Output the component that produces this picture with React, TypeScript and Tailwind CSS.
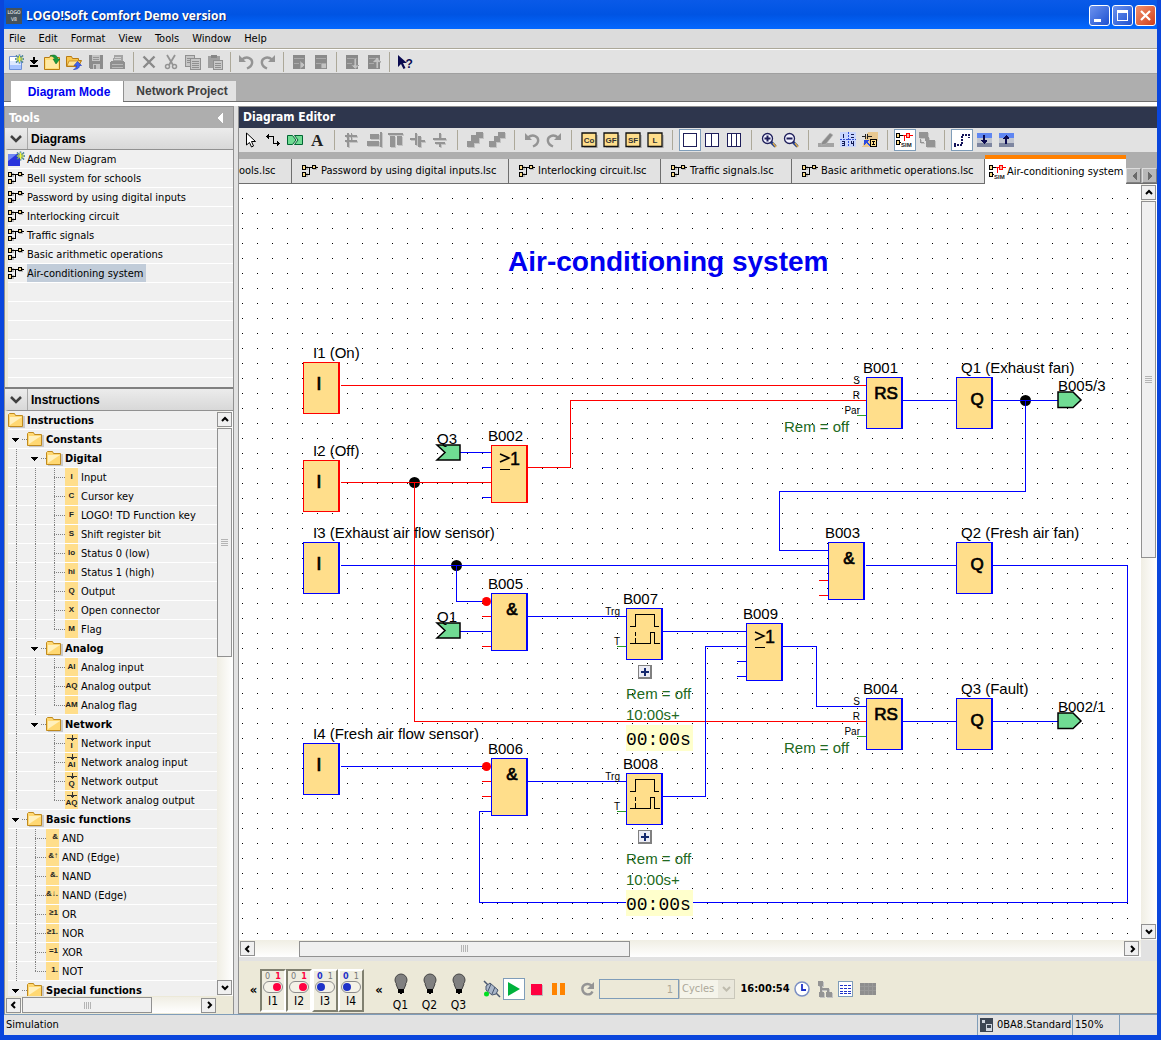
import type { ReactNode } from "react";

const UI = "font-['DejaVu_Sans_Condensed','DejaVu_Sans',sans-serif]";
const ARIAL = "font-['Liberation_Sans',Arial,sans-serif]";

/* ---------- icons ---------- */

function Svg({ w = 16, h = 16, smooth = false, children }: { w?: number; h?: number; smooth?: boolean; children: ReactNode }) {
  return (
    <svg width={w} height={h} viewBox={`0 0 ${w} ${h}`} fill="none" shapeRendering={smooth ? "auto" : "crispEdges"} className="shrink-0" aria-hidden="true">
      {children}
    </svg>
  );
}

function Sparkle({ x, y }: { x: number; y: number }) {
  return (
    <g transform={`translate(${x} ${y})`}>
      <path d="M-4 0h9M0.5-4.500v9M-3-3.500l7 7M4-3.500l-7 7" stroke="#2d6f9c" strokeWidth="1.600" />
      <path d="M-3 0h7M0.500-3.500v7M-2-2.500l5 5M3-2.500l-5 5" stroke="#f6f63a" strokeWidth="1" />
    </g>
  );
}

const NewDocIcon = () => (
  <Svg smooth>
    <path d="M1.500 2.500h12v13h-12z" fill="#fff" stroke="#6d8fd8" />
    <path d="M2 11h11v4H2z" fill="#a9c4ff" />
    <path d="M2 7h11v4H2z" fill="#dfe9ff" />
    <Sparkle x={11} y={5} />
  </Svg>
);
const DropIcon = () => (
  <Svg w={8} h={10}>
    <path d="M3 0h2v3h3v1l-4 3l-4-3v-1h3zM0 8h8v2H0z" fill="#000" />
  </Svg>
);
const OpenIcon = () => (
  <Svg smooth>
    <path d="M.5 3.500h5l1-2h4v2h5v12H.5z" fill="#ffdf7a" stroke="#b97b12" />
    <path d="M2 6h12v8H2z" fill="#ffe9a4" />
    <path d="M6 2c4-2 7-1 8 3h2l-4 5-3-5h2c-1-2-3-3-5-3z" fill="#189a3c" stroke="#0d6b28" strokeWidth=".5" />
  </Svg>
);
const FolderUpIcon = () => (
  <Svg smooth>
    <path d="M.5 2.500h5l1 2h6v2h3l-3 6H.5z" fill="#f8c64f" stroke="#b97b12" />
    <path d="M3 7h12l-3 5H1z" fill="#ffe394" stroke="#b97b12" strokeWidth=".7" />
    <path d="M11.500 7.500l4 4h-2c0 3-3 4-6 4 2-1 3-2 3-4H8z" fill="#3f63f0" stroke="#1c38b8" strokeWidth=".6" />
  </Svg>
);
const SaveIcon = () => (
  <Svg>
    <path d="M1 1h14v14H2l-1-1z" fill="#8c8c8c" />
    <path d="M4 1h8v6H4zM5 10h7v5H5z" fill="#c4c4c4" />
    <path d="M5 3h6M5 5h6" stroke="#969696" />
    <path d="M6 11h2v4H6z" fill="#8c8c8c" />
  </Svg>
);
const PrintIcon = () => (
  <Svg>
    <path d="M4 1h9v6H3z" fill="#a4a4a4" />
    <path d="M5 3h6M4 5h7" stroke="#d2d2d2" />
    <path d="M1 7h13l1 2v6H0V8z" fill="#909090" />
    <path d="M2 10h11M2 13h11" stroke="#b8b8b8" />
  </Svg>
);
const DeleteIcon = () => (
  <Svg smooth>
    <path d="M2.500 2.500l11 11M13.500 2.500l-11 11" stroke="#8a8a8a" strokeWidth="2.400" />
  </Svg>
);
const CutIcon = () => (
  <Svg smooth>
    <path d="M4 1l6 10M12 1L6 11" stroke="#949494" strokeWidth="1.800" />
    <circle cx="4.500" cy="12.500" r="2" stroke="#949494" strokeWidth="1.500" />
    <circle cx="11.500" cy="12.500" r="2" stroke="#949494" strokeWidth="1.500" />
  </Svg>
);
const CopyIcon = () => (
  <Svg>
    <path d="M.5 1.500h9v11h-9z" fill="#c6c6c6" stroke="#909090" />
    <path d="M2 4h6M2 6h6M2 8h6" stroke="#909090" />
    <path d="M5.500 4.500h10v11h-10z" fill="#c6c6c6" stroke="#909090" />
    <path d="M7 7h7M7 9h7M7 11h7M7 13h7" stroke="#909090" />
  </Svg>
);
const PasteIcon = () => (
  <Svg>
    <path d="M1 2h12v12H1z" fill="#a0a0a0" />
    <path d="M4 1h6v3H4z" fill="#868686" />
    <path d="M6.500 6.500h9v9h-9z" fill="#c8c8c8" stroke="#909090" />
    <path d="M8 9h6M8 11h6M8 13h6" stroke="#909090" />
  </Svg>
);
const UndoIcon = () => (
  <Svg smooth>
    <path d="M1 1v7h7z" fill="#949494" />
    <path d="M4 5.500C9 1.500 15 4.500 14 9.500c-.5 2.500-2.500 4-5 5" stroke="#949494" strokeWidth="2.400" />
  </Svg>
);
const RedoIcon = () => (
  <Svg smooth>
    <path d="M15 1v7H8z" fill="#949494" />
    <path d="M12 5.500C7 1.500 1 4.500 2 9.500c.5 2.500 2.500 4 5 5" stroke="#949494" strokeWidth="2.400" />
  </Svg>
);
const ModuleIcon = ({ d }: { d: string }) => (
  <Svg>
    <path d="M2 1h12v14H2z" fill="#8a8a8a" />
    <path d="M3 4.500h10M3 9.500h5" stroke="#aaa" />
    <path d={d} fill="#c2c2c2" stroke="#949494" strokeWidth=".5" />
  </Svg>
);
const HelpIcon = () => (
  <Svg smooth>
    <path d="M1 1v12l3-3 2.500 5 2-1-2.500-5h4z" fill="#0a0a50" />
    <text x="8.500" y="14" fontSize="12" fontWeight="700" fontFamily="Liberation Sans" fill="#0a0a50">?</text>
  </Svg>
);

const DiagramIcon = () => (
  <Svg w={16} h={14}>
    <path d="M2 2h4v4H2zM2 9h4v4H2zM11 2h4v4h-4z" fill="#b9b9b9" />
    <path d="M4 3.500h12M7.500 3v7M4 10.500h4" stroke="#000" />
    <path d="M.5 1.500h3v4h-3zM.5 8.500h3v4h-3zM10.500 1.500h3v3h-3z" fill="#ffde8b" stroke="#000" />
  </Svg>
);
const SimIcon = () => (
  <Svg w={18} h={16}>
    <path d="M8.500 9V3.500M6 3.500h11" stroke="#f00" />
    <path d="M10.500 1.500h3v4h-3z" fill="#ffb0a0" stroke="#f00" />
    <path d="M.5 1.500h3v4h-3zM.5 8.500h3v4h-3z" fill="#ffde8b" stroke="#000" />
    <path d="M4 3.500h3M4 10.500h1" stroke="#000" />
    <text x="5" y="15" fontSize="6" fontFamily="Liberation Sans" fontWeight="700" fill="#222">SIM</text>
  </Svg>
);

const PointerIcon = () => (
  <Svg smooth>
    <path d="M3.500 1v12l3-2.500 2 4.500 2-1-2-4.500h4z" fill="#fff" stroke="#000" />
  </Svg>
);
const WireIcon = () => (
  <Svg>
    <path d="M1 4.500h8M8.500 5v6M8 11.500h7M3.500 2v5M2.500 3v3M12.500 9v5M13.500 10v3" stroke="#000" />
  </Svg>
);
const ConnectorIcon = () => (
  <Svg smooth>
    <path d="M.5 3.500h5l3.500 4.500-3.500 4.500h-5z" fill="#70db93" stroke="#063" />
    <path d="M7.500 3.500h8v9h-8l3.500-4.500z" fill="#70db93" stroke="#063" />
  </Svg>
);
const TextIcon = () => (
  <Svg smooth>
    <text x="2" y="14" fontSize="17" fontWeight="700" fontFamily="Liberation Serif" fill="#222">A</text>
  </Svg>
);
const GrayIcon = ({ d }: { d: string }) => (
  <Svg w={17} h={17}>
    <path d={d} fill="#c4c4c4" transform="translate(1 1)" />
    <path d={d} fill="#949494" />
  </Svg>
);
const BoxIcon = ({ t }: { t: string }) => (
  <Svg w={17} h={16} smooth>
    <path d="M3 3h14v13H3z" fill="#bbb" />
    <path d="M1 1h14v13.500H1z" fill="#ffde8b" stroke="#111" strokeWidth="1.300" />
    <text x="8" y="11" textAnchor="middle" fontSize="8" fontWeight="700" fontFamily="Liberation Sans" fill="#333">{t}</text>
  </Svg>
);
const PageIcon = ({ n }: { n: number }) => (
  <Svg w={14} h={14}>
    <path d="M.5 .5h13v13H.5z" fill="#fff" stroke="#1e1e5a" />
    {n === 2 && <path d="M6.500 0v14" stroke="#1e1e5a" />}
    {n === 3 && <path d="M4.500 0v14M9.500 0v14" stroke="#1e1e5a" />}
  </Svg>
);
const ZoomIcon = ({ plus }: { plus?: boolean }) => (
  <Svg smooth>
    <path d="M10 10l4.500 4.500" stroke="#1e3a8a" strokeWidth="3" />
    <path d="M12 11l3 4" stroke="#d6a84a" strokeWidth="1.600" />
    <circle cx="6.500" cy="6.500" r="5" fill="#f2f2ff" stroke="#1e1e5a" strokeWidth="1.300" />
    <path d={plus ? "M3.500 6.500h6M6.500 3.500v6" : "M3.500 6.500h6"} stroke="#1e1e5a" strokeWidth="2" />
  </Svg>
);
const PenIcon = () => (
  <Svg smooth>
    <path d="M0 11h16v4H0z" fill="#a4a4a4" />
    <path d="M4 10L12 1l3 2-7 9-5 1z" fill="#8c8c8c" stroke="#bbb" strokeWidth=".6" />
  </Svg>
);
const PagesIcon = () => (
  <Svg>
    <path d="M0 0h16v15H0z" fill="#c9d6ff" />
    <path d="M0 7.500h16M8.500 0v15" stroke="#3250d8" strokeDasharray="2 1" />
    <path d="M3 2h1v4H3zM11 2h3v1h-1v1h-1v1h2v1h-3V5h1V4h1V3h-2zM2 9h3v5H2v-1h2v-1H2v-1h2v-1H2zM11 9h1v2h1V9h1v5h-1v-2h-2z" fill="#111a55" />
  </Svg>
);
const ConvertIcon = () => (
  <Svg>
    <path d="M6 0h10v9L9 15H0z" fill="#e8c890" />
    <path d="M0 4.500h3M3.500 2v5M5.500 2v5M6 4.500h4" stroke="#222" />
    <path d="M2 8h5l-2 2 3 3-1 1-3-3-2 2z" fill="#2a4ae0" />
    <path d="M8.500 7.500h6v7h-6z" fill="#ffde8b" stroke="#000" />
    <path d="M10 9.500h3M10 12.500h3M11.500 9v4" stroke="#000" />
  </Svg>
);
const StepIcon = () => (
  <Svg>
    <path d="M0 12h8v2H0zM7 3h2v11H7zM7 3h8v2H7z" fill="#fff" />
    <path d="M0 13h8M8 12V3M8 3h8M1 11v4M15 2v4" stroke="#14145a" strokeWidth="2" strokeDasharray="2 1" />
  </Svg>
);
const LayerIcon = ({ up }: { up?: boolean }) => (
  <Svg>
    <path d="M1 1h15v5H1z" fill="#5f86f2" />
    <path d="M1 6h15v5H1z" fill="#c2c6d0" />
    <path d="M1 11h15v4H1z" fill="#7e86a0" />
    <path d={up ? "M7 12V7H5V6l3-3 3 3v1H9v5z" : "M7 3v5H5v1l3 3 3-3V8H9V3z"} fill="#0a0a50" />
  </Svg>
);

const Folder = () => (
  <Svg w={17} h={17} smooth>
    <path d="M2 4h15v12H2z" fill="#c9c9c9" />
    <path d="M.5 14.500V2.500l1-1h5l1 2h7v11z" fill="#ffd872" stroke="#c08a1e" />
    <path d="M2 5h12L2 13z" fill="#fff0bd" />
  </Svg>
);
const AddDiagramIcon = () => (
  <Svg w={17} h={17} smooth>
    <path d="M0 3h12v12H0z" fill="#2a34dc" />
    <path d="M0 3h9L0 10z" fill="#7189f5" />
    <Sparkle x={12} y={5} />
  </Svg>
);

/* ---------- shared parts ---------- */

function ToolButton({ label, framed, children }: { label: string; framed?: boolean; children: ReactNode }) {
  return (
    <button type="button" aria-label={label} className={`flex h-[22px] w-[22px] shrink-0 items-center justify-center ${framed ? "border border-[#7f9db9] bg-white" : ""}`}>
      {children}
    </button>
  );
}

function Sep({ wide }: { wide?: boolean }) {
  return (
    <span className={`flex h-5 shrink-0 justify-center ${wide ? "w-[13px]" : "w-[9px]"}`}>
      <span className="w-px bg-[#aca899]" />
    </span>
  );
}

type Dir = "up" | "down" | "left" | "right";
const arrowPaths: Record<Dir, string> = {
  up: "M1 5l3-3 3 3",
  down: "M1 2l3 3 3-3",
  left: "M5 1L2 4l3 3",
  right: "M3 1l3 3-3 3",
};

function ScrollArrow({ dir }: { dir: Dir }) {
  return (
    <button type="button" aria-label={`Scroll ${dir}`} className="flex h-[15px] w-[15px] shrink-0 items-center justify-center border border-[#919191] bg-[#f0f0f0]">
      <Svg w={8} h={8} smooth>
        <path d={arrowPaths[dir]} stroke="#000" strokeWidth="2" />
      </Svg>
    </button>
  );
}

function Grip({ vertical }: { vertical?: boolean }) {
  return (
    <span className={`flex gap-px ${vertical ? "flex-col" : ""}`}>
      {[0, 1, 2, 3].map((i) => (
        <span key={i} className={vertical ? "h-px w-[7px] bg-[#b4b4b4]" : "h-[7px] w-px bg-[#b4b4b4]"} />
      ))}
    </span>
  );
}

/* ---------- sidebar ---------- */

function SectionHeader({ title }: { title: string }) {
  return (
    <div className="flex h-[21px] shrink-0 items-center bg-linear-to-b from-[#ececec] to-[#d8d8d8]">
      <button type="button" aria-label={`Collapse ${title}`} className="flex h-full w-[23px] items-center justify-center border-r border-[#a8a8a8]">
        <Svg w={12} h={8} smooth>
          <path d="M1 1l5 5 5-5" stroke="#404040" strokeWidth="2.500" />
        </Svg>
      </button>
      <h2 className={`pl-[3px] text-xs font-bold ${ARIAL}`}>{title}</h2>
    </div>
  );
}

const diagrams = ["Bell system for schools", "Password by using digital inputs", "Interlocking circuit", "Traffic signals", "Basic arithmetic operations", "Air-conditioning system"];

type Row = { label: string; kind: "root" | "folder" | "leaf"; guides: boolean[]; last?: boolean; glyph?: string; net?: boolean };

const leaf = (label: string, glyph: string, guides: boolean[], last = false, net = false): Row => ({ label, kind: "leaf", glyph, guides, last, net });
const folder = (label: string, guides: boolean[]): Row => ({ label, kind: "folder", guides });

const tree: Row[] = [
  { label: "Instructions", kind: "root", guides: [] },
  folder("Constants", []),
  folder("Digital", [true]),
  leaf("Input", "I", [true, true]),
  leaf("Cursor key", "C", [true, true]),
  leaf("LOGO! TD Function key", "F", [true, true]),
  leaf("Shift register bit", "S", [true, true]),
  leaf("Status 0 (low)", "lo", [true, true]),
  leaf("Status 1 (high)", "hi", [true, true]),
  leaf("Output", "Q", [true, true]),
  leaf("Open connector", "X", [true, true]),
  leaf("Flag", "M", [true, true], true),
  folder("Analog", [true]),
  leaf("Analog input", "AI", [true, true]),
  leaf("Analog output", "AQ", [true, true]),
  leaf("Analog flag", "AM", [true, true], true),
  folder("Network", [true]),
  leaf("Network input", "I", [true, false], false, true),
  leaf("Network analog input", "AI", [true, false], false, true),
  leaf("Network output", "Q", [true, false], false, true),
  leaf("Network analog output", "AQ", [true, false], true, true),
  folder("Basic functions", []),
  leaf("AND", "&", [true]),
  leaf("AND (Edge)", "&↑", [true]),
  leaf("NAND", "&.", [true]),
  leaf("NAND (Edge)", "&↓.", [true]),
  leaf("OR", "≥1", [true]),
  leaf("NOR", "≥1.", [true]),
  leaf("XOR", "=1", [true]),
  leaf("NOT", "1.", [true], true),
  folder("Special functions", []),
];

function Guide({ d }: { d: string }) {
  return (
    <Svg w={19} h={19}>
      <path d={d} stroke="#808080" strokeDasharray="1 1" />
    </Svg>
  );
}

function Glyph({ row }: { row: Row }) {
  const place = row.guides.length === 1 ? "items-end pt-[3px] pr-px" : row.net ? "items-center pt-px" : "items-center pt-1";
  return (
    <span className={`flex h-[18px] w-[13px] shrink-0 flex-col overflow-hidden bg-[#ffde8b] text-[8px] leading-[9px] font-bold text-[#222] ${place} ${ARIAL}`}>
      {row.net && (
        <Svg w={12} h={6}>
          <path d="M1 3.500h10M6.500 0v6M5 4.500h3" stroke="#333" />
        </Svg>
      )}
      <span>{row.glyph}</span>
    </span>
  );
}

function TreeRow({ row }: { row: Row }) {
  return (
    <li className="flex h-[19px] shrink-0 items-center border-b border-white bg-[#f0f0f0]">
      {row.guides.map((on, i) => (on ? <Guide key={i} d="M8.500 0v19" /> : <span key={i} className="w-[19px]" />))}
      {row.kind === "folder" && (
        <Svg w={19} h={19}>
          <path d="M4 8h7v1h-1v1h-1v1h-1v1h-1v-1h-1v-1h-1v-1h-1z" fill="#000" />
          <path d="M14 9.500h5" stroke="#808080" strokeDasharray="1 1" />
        </Svg>
      )}
      {row.kind === "leaf" && <Guide d={row.last ? "M8.500 0v10M8 9.500h11" : "M8.500 0v19M8 9.500h11"} />}
      {row.kind === "leaf" ? <Glyph row={row} /> : <Folder />}
      <button type="button" className={`truncate pt-px text-[11px] leading-4 ${row.kind === "leaf" ? "pl-[3px]" : "pl-[2px] font-bold"}`}>
        {row.label}
      </button>
    </li>
  );
}

function Sidebar() {
  return (
    <aside className="flex w-[230px] shrink-0 flex-col border-x border-t border-[#919191]">
      <div className="flex h-[21px] shrink-0 items-center justify-between bg-[#aeaeae] pr-[10px] pl-1 text-white">
        <h2 className="text-xs leading-5 font-bold">Tools</h2>
        <button type="button" aria-label="Hide tools">
          <Svg w={6} h={12}>
            <path d="M6 0v12L0 6z" fill="#fff" />
          </Svg>
        </button>
      </div>
      <SectionHeader title="Diagrams" />
      <ul className="flex h-[238px] shrink-0 flex-col overflow-hidden border-t border-l-[3px] border-t-[#919191] border-l-[#ece9d8] bg-[#f0f0f0]">
        <li className="flex h-[19px] shrink-0 items-center border-b border-white">
          <AddDiagramIcon />
          <button type="button" className="pt-px pl-[2px] text-[11px] leading-4">Add New Diagram</button>
        </li>
        {diagrams.map((d, i) => (
          <li key={d} className="flex h-[19px] shrink-0 items-center border-b border-white">
            <DiagramIcon />
            <button type="button" className={`ml-[3px] h-[18px] pt-px pr-[3px] text-[11px] leading-4 ${i === 5 ? "bg-[#c1ccd9]" : ""}`}>
              {d}
            </button>
          </li>
        ))}
        {[0, 1, 2, 3, 4].map((i) => (
          <li key={i} className="h-[19px] shrink-0 border-b border-white" />
        ))}
      </ul>
      <div className="h-[2px] shrink-0 bg-[#808080]" />
      <SectionHeader title="Instructions" />
      <div className="flex min-h-0 flex-1 border-t border-l-[3px] border-t-[#919191] border-l-[#ece9d8]">
        <ul className="flex min-h-0 min-w-0 flex-1 flex-col overflow-hidden">
          {tree.map((row, i) => (
            <TreeRow key={i} row={row} />
          ))}
        </ul>
        <div className="flex w-4 flex-col items-start bg-linear-to-r from-[#f0eee4] to-white pt-px pb-px">
          <ScrollArrow dir="up" />
          <div className="mt-px flex h-[229px] w-[15px] items-center justify-center border border-[#919191] bg-[#f0f0f0]">
            <Grip vertical />
          </div>
          <div className="flex-1" />
          <ScrollArrow dir="down" />
        </div>
      </div>
      <div className="flex h-[18px] shrink-0 items-center bg-[#ece9d8] pr-[17px] pl-px">
        <ScrollArrow dir="left" />
        <div className="flex h-4 flex-1 bg-linear-to-b from-[#f0eee4] to-white px-px">
          <div className="flex h-4 w-[130px] items-center justify-center border border-[#919191] bg-[#f0f0f0]">
            <Grip />
          </div>
        </div>
        <ScrollArrow dir="right" />
      </div>
    </aside>
  );
}

/* ---------- circuit ---------- */

const BLUE = "#0000ff";
const RED = "#ff0000";

const wires: { d: string; c: string }[] = [
  { c: RED, d: "M341 385H866M528 467H570V400H866M341 482H491M414 482V721H866" },
  { c: RED, d: "M482 616H491M482 646H491M482 781H491M482 796H491M819 580H828M819 595H828" },
  { c: BLUE, d: "M460 452H491M482 467H491M482 497H491M341 565H828M456 565V601H486M460 631H491M528 616H626" },
  { c: BLUE, d: "M341 766H486M528 781H626M491 811H479V902H1127V565H993M866 565H956" },
  { c: BLUE, d: "M663 631H746M663 796H705V646H746M737 661H746M737 676H746M783 646H816V706H866" },
  { c: BLUE, d: "M903 721H956M993 721H1057M903 400H956M993 400H1057M1025 400V491H779V550H828" },
  { c: "#2e9e2e", d: "M857 415H866M857 736H866M617 646H626M617 811H626" },
];

type Block = { x: number; y: number; t: string; h?: number; c?: string; label: string };
const blocks: Block[] = [
  { x: 303, y: 362, t: "I", c: RED, label: "I1 (On)" },
  { x: 303, y: 460, t: "I", c: RED, label: "I2 (Off)" },
  { x: 303, y: 542, t: "I", label: "I3 (Exhaust air flow sensor)" },
  { x: 303, y: 743, t: "I", label: "I4 (Fresh air flow sensor)" },
  { x: 491, y: 445, t: ">1", h: 58, c: RED, label: "B002" },
  { x: 491, y: 593, t: "&", h: 58, label: "B005" },
  { x: 491, y: 758, t: "&", h: 58, label: "B006" },
  { x: 626, y: 608, t: "timer", label: "B007" },
  { x: 626, y: 773, t: "timer", label: "B008" },
  { x: 746, y: 623, t: ">1", h: 58, label: "B009" },
  { x: 866, y: 377, t: "RS", label: "B001" },
  { x: 866, y: 698, t: "RS", label: "B004" },
  { x: 828, y: 542, t: "&", h: 58, label: "B003" },
  { x: 956, y: 377, t: "Q", label: "Q1 (Exhaust fan)" },
  { x: 956, y: 542, t: "Q", label: "Q2 (Fresh air fan)" },
  { x: 956, y: 698, t: "Q", label: "Q3 (Fault)" },
];

const labelOffset: Record<string, number> = { I: 10, Q: 5 };
const glyphX: Record<string, number> = { I: 16, Q: 21, "&": 21, RS: 20 };

function BlockNode({ b }: { b: Block }) {
  const h = b.h ?? 52;
  const c = b.c ?? BLUE;
  return (
    <g transform={`translate(${b.x} ${b.y})`}>
      <rect width="37" height={h} fill={c} />
      <rect x="1" y="1" width="34" height={h - 2} fill="#ffde8b" />
      {b.t === "timer" && (
        <path d="M4 18.500h5M9.500 19V6M9 6.500h19M28.500 6v13M28 18.500h5M4 35.500h20M24.500 36V24M24 24.500h5M28.500 24v12M28 35.500h6M9.500 24v4M9.500 30v5" stroke="#000" fill="none" />
      )}
      {b.t === ">1" && (
        <>
          <path d="M9 9l9 4-9 4" stroke="#000" strokeWidth="1.500" fill="none" shapeRendering="auto" />
          <path d="M9 24.500h10" stroke="#000" />
          <text x="19" y="20" fontSize="18" stroke="#000" strokeWidth=".4">1</text>
        </>
      )}
      {glyphX[b.t] && (
        <text x={glyphX[b.t]} y={b.t === "Q" || b.t === "I" ? 28 : 22} fontSize={b.t === "I" ? 19 : 17} stroke="#000" strokeWidth=".7" textAnchor="middle">
          {b.t}
        </text>
      )}
      <text x={labelOffset[b.t] ?? -3} y="-4" fontSize="15">{b.label}</text>
    </g>
  );
}

const pins: [number, number, string][] = [
  [860, 384, "S"], [860, 399, "R"], [860, 414, "Par"],
  [860, 705, "S"], [860, 720, "R"], [860, 735, "Par"],
  [620, 615, "Trg"], [620, 645, "T"], [620, 780, "Trg"], [620, 810, "T"],
];

function TimerInfo({ y }: { y: number }) {
  return (
    <g transform={`translate(626 ${y})`}>
      <rect x="12" y="57" width="14" height="14" fill="#808080" />
      <rect x="13" y="58" width="11" height="11" fill="#ececf4" />
      <path d="M15 64h8M19 60v8" stroke="#14286e" strokeWidth="2" />
      <g fill="#216921">
        <text y="91" fontSize="15">Rem = off</text>
        <text y="112" fontSize="15">10:00s+</text>
      </g>
      <rect y="117" width="67" height="26" fill="#ffffcc" />
      <text y="137" fontSize="18" fontFamily="Liberation Mono, monospace">00:00s</text>
    </g>
  );
}

function Circuit() {
  return (
    <svg width="902" height="756" viewBox="239 184 902 756" shapeRendering="crispEdges" role="img" aria-label="Air-conditioning system circuit" className={`shrink-0 ${ARIAL}`}>
      <defs>
        <pattern id="grid" x="302" y="198" width="15" height="15" patternUnits="userSpaceOnUse">
          <rect width="1" height="1" fill="#000" />
        </pattern>
      </defs>
      <rect x="239" y="184" width="902" height="756" fill="#fff" />
      <rect x="239" y="184" width="902" height="756" fill="url(#grid)" />
      <text x="508" y="271" fontSize="28" fontWeight="700" fill="#0000f0">Air-conditioning system</text>
      {[[414, 482], [456, 565], [1025, 400]].map(([x, y]) => (
        <circle key={x} cx={x + 0.5} cy={y + 0.5} r="5.500" shapeRendering="auto" />
      ))}
      <g transform="translate(.5 .5)" fill="none" strokeLinecap="square">
        {wires.map((w) => (
          <path key={w.d} d={w.d} stroke={w.c} />
        ))}
      </g>
      {[601, 766].map((y) => (
        <circle key={y} cx="486.500" cy={y + 0.5} r="4.500" fill={RED} shapeRendering="auto" />
      ))}
      {blocks.map((b) => (
        <BlockNode key={b.label} b={b} />
      ))}
      {[{ y: 445, t: "Q3" }, { y: 623, t: "Q1" }].map((c) => (
        <g key={c.t} transform={`translate(437 ${c.y})`}>
          <path d="M0 0h23v15H0l8-7.500z" fill="#70db93" stroke="#000" strokeWidth="1.500" shapeRendering="auto" />
          <text y="-1" fontSize="15">{c.t}</text>
        </g>
      ))}
      {[{ y: 392, t: "B005/3" }, { y: 713, t: "B002/1" }].map((c) => (
        <g key={c.t} transform={`translate(1058 ${c.y})`}>
          <path d="M0 0h15l8 8-8 7.500H0z" fill="#70db93" stroke="#000" strokeWidth="1.500" shapeRendering="auto" />
          <text y="-1" fontSize="15">{c.t}</text>
        </g>
      ))}
      {pins.map(([x, y, t]) => (
        <text key={`${x}-${y}`} x={x} y={y} fontSize="10" textAnchor="end">{t}</text>
      ))}
      <TimerInfo y={608} />
      <TimerInfo y={773} />
      <g fontSize="15" fill="#216921">
        <text x="784" y="432">Rem = off</text>
        <text x="784" y="753">Rem = off</text>
      </g>
    </svg>
  );
}

/* ---------- editor ---------- */

const docTabs = [
  { label: "Password by using digital inputs.lsc", w: "w-[217px]" },
  { label: "Interlocking circuit.lsc", w: "w-[152px]" },
  { label: "Traffic signals.lsc", w: "w-[131px]" },
  { label: "Basic arithmetic operations.lsc", w: "w-[193px]" },
];

function EditorToolbar() {
  return (
    <div className="flex h-6 shrink-0 items-center bg-[#e2e2e2] pl-px">
      <ToolButton label="Selection"><PointerIcon /></ToolButton>
      <ToolButton label="Connect"><WireIcon /></ToolButton>
      <ToolButton label="Cut or join connection"><ConnectorIcon /></ToolButton>
      <ToolButton label="Insert comment"><TextIcon /></ToolButton>
      <Sep wide />
      <ToolButton label="Align automatically"><GrayIcon d="M3 1h2v14H3zM7 1h1v9H7zM1 3h12v2H1zM1 8h12v2H1z" /></ToolButton>
      <ToolButton label="Align right"><GrayIcon d="M14 0h2v15h-2zM4 2h9v5H4zM1 9h12v5H1z" /></ToolButton>
      <ToolButton label="Align top"><GrayIcon d="M0 1h15v2H0zM2 4h5v11H2zM9 4h5v9H9z" /></ToolButton>
      <ToolButton label="Distribute horizontally"><GrayIcon d="M5 1h2v12H5zM0 6h5v2H0zM8 4h3v11H8zM11 8h4v2h-4z" /></ToolButton>
      <ToolButton label="Distribute vertically"><GrayIcon d="M1 6h13v2H1zM7 1h2v5H7zM3 10h10v2H3zM7 12h2v3H7z" /></ToolButton>
      <Sep wide />
      <ToolButton label="Bring to front"><GrayIcon d="M9 0h7v6H9zM4 3h8v8H4zM0 9h7v6H0z" /></ToolButton>
      <ToolButton label="Send to back"><GrayIcon d="M9 0h7v6H9zM5 4h6v6H5zM0 9h7v6H0z" /></ToolButton>
      <Sep wide />
      <ToolButton label="Undo edit"><UndoIcon /></ToolButton>
      <ToolButton label="Redo edit"><RedoIcon /></ToolButton>
      <Sep wide />
      <ToolButton label="Constants"><BoxIcon t="Co" /></ToolButton>
      <ToolButton label="Basic functions"><BoxIcon t="GF" /></ToolButton>
      <ToolButton label="Special functions"><BoxIcon t="SF" /></ToolButton>
      <ToolButton label="Data log"><BoxIcon t="L" /></ToolButton>
      <Sep wide />
      <ToolButton label="One window" framed><PageIcon n={1} /></ToolButton>
      <ToolButton label="Two windows"><PageIcon n={2} /></ToolButton>
      <ToolButton label="Three windows"><PageIcon n={3} /></ToolButton>
      <Sep wide />
      <ToolButton label="Zoom in"><ZoomIcon plus /></ToolButton>
      <ToolButton label="Zoom out"><ZoomIcon /></ToolButton>
      <Sep wide />
      <ToolButton label="Highlight"><PenIcon /></ToolButton>
      <ToolButton label="Page layout"><PagesIcon /></ToolButton>
      <ToolButton label="Convert to LAD"><ConvertIcon /></ToolButton>
      <Sep wide />
      <ToolButton label="Simulation" framed><SimIcon /></ToolButton>
      <ToolButton label="Online test"><GrayIcon d="M0 0h9v6H0zM1 7h1v4H1zM2 10h3v1H2zM6 5h4v4H6zM7 8h9v7H7z" /></ToolButton>
      <Sep wide />
      <ToolButton label="Select lines" framed><StepIcon /></ToolButton>
      <ToolButton label="Expand all"><LayerIcon /></ToolButton>
      <ToolButton label="Collapse all"><LayerIcon up /></ToolButton>
    </div>
  );
}

function DocTabs() {
  return (
    <div className="flex h-8 shrink-0 items-end overflow-hidden bg-[#aeaeae] text-[11px]">
      <button type="button" className="flex h-[25px] w-[53px] shrink-0 items-center justify-start border-r border-b border-[#6e6e6e] bg-[#e2e2e2] leading-4">ools.lsc</button>
      {docTabs.map((t) => (
        <button key={t.label} type="button" className={`flex h-[25px] shrink-0 items-center gap-[3px] border-r border-b border-[#6e6e6e] bg-[#e2e2e2] pl-[10px] leading-4 whitespace-nowrap ${t.w}`}>
          <DiagramIcon />
          {t.label}
        </button>
      ))}
      <button type="button" className="flex h-[29px] min-w-0 flex-1 items-center overflow-hidden border-t-4 border-[#ff8000] bg-white pl-1 leading-4 whitespace-nowrap">
        <SimIcon />
        Air-conditioning system
      </button>
      <div className="flex h-[25px] shrink-0 items-end gap-px border-b border-[#6e6e6e]">
        {["M7 0v8L2 4z", "M2 0v8l5-4z"].map((d, i) => (
          <button key={d} type="button" aria-label={i ? "Next tab" : "Previous tab"} className="flex h-[15px] w-[15px] items-center justify-center border border-t-[#ddd] border-r-[#808080] border-b-[#808080] border-l-[#ddd] bg-[#b8b8b8]">
            <Svg w={8} h={8}>
              <path d={d} fill="#6a6a6a" />
            </Svg>
          </button>
        ))}
      </div>
    </div>
  );
}

const inputs = [
  { id: "I1", on: true },
  { id: "I2", on: true },
  { id: "I3", on: false },
  { id: "I4", on: false },
];

function InputSwitch({ id, on }: { id: string; on: boolean }) {
  const frame = on ? "border-t-[#808070] border-l-[#808070] border-r-white border-b-white" : "border-t-white border-l-white border-r-[#808070] border-b-[#808070]";
  return (
    <button type="button" aria-pressed={on} className={`flex h-[43px] w-[26px] flex-col items-center border-2 bg-[#efede0] ${frame}`}>
      <span className="flex gap-[5px] text-[9px] leading-[10px]">
        <span className={on ? "text-[#777]" : "font-bold text-[#1e32c8]"}>0</span>
        <span className={on ? "font-bold text-[#ff0040]" : "text-[#777]"}>1</span>
      </span>
      <Svg w={20} h={12} smooth>
        <rect x=".5" y=".5" width="19" height="11" rx="5.500" fill="#f4f2e8" stroke="#8c8c8c" />
        <circle cx={on ? 14 : 6} cy="6" r="4" fill={on ? "#ff0040" : "#1e32c8"} />
      </Svg>
      <span className="text-xs leading-[17px]">{id}</span>
    </button>
  );
}

function Lamp({ id }: { id: string }) {
  return (
    <div className="flex w-[29px] flex-col items-center">
      <Svg w={16} h={22} smooth>
        <circle cx="8" cy="7" r="6" fill="#808080" stroke="#444" />
        <path d="M3 11l2 5h6l2-5z" fill="#808080" />
        <path d="M3 11l2 5M13 11l-2 5" stroke="#444" />
        <path d="M5 16h6v4H9v1H7v-1H5z" fill="#000" />
      </Svg>
      <span className="text-xs leading-5">{id}</span>
    </div>
  );
}

function SimulationBar() {
  return (
    <div className="flex h-[53px] shrink-0 items-center border-b border-[#919191] bg-[#ece9d8] pt-px pl-2">
      <button type="button" aria-label="Collapse inputs" className="w-[13px] pt-1 text-[13px] leading-4 font-bold">«</button>
      <div className="flex pt-[6px]">
        {inputs.map((s) => (
          <InputSwitch key={s.id} {...s} />
        ))}
      </div>
      <button type="button" aria-label="Collapse outputs" className="ml-2 w-[14px] pt-1 text-[13px] leading-4 font-bold">«</button>
      <div className="flex pt-3">
        {["Q1", "Q2", "Q3"].map((q) => (
          <Lamp key={q} id={q} />
        ))}
      </div>
      <div className="flex flex-1 items-center pt-[3px] pl-2">
        <ToolButton label="Mains power">
          <Svg w={18} h={18} smooth>
            <path d="M1 1l4 4M13 13l4 4" stroke="#48566e" strokeWidth="1.500" />
            <path d="M3 6l4-3 8 7-2 4-4 1-6-5z" fill="#a9b6c9" stroke="#48566e" />
            <path d="M8 4l-3 7M12 7l-3 7" stroke="#48566e" />
            <circle cx="3.500" cy="14" r="2.500" fill="#00e020" />
          </Svg>
        </ToolButton>
        <ToolButton label="Start simulation" framed>
          <Svg w={14} h={14} smooth>
            <path d="M1 0l12 7-12 7z" fill="#00b23c" />
          </Svg>
        </ToolButton>
        <ToolButton label="Stop simulation"><span className="h-[11px] w-[11px] bg-[#ff0040] shadow-[1px_1px_0_#bbb]" /></ToolButton>
        <ToolButton label="Pause simulation">
          <span className="flex gap-[3px]">
            <span className="h-3 w-[5px] bg-[#ff8400]" />
            <span className="h-3 w-[5px] bg-[#ff8400]" />
          </span>
        </ToolButton>
        <span className="w-2" />
        <ToolButton label="Run cycles">
          <Svg smooth>
            <path d="M11.500 4.500C7 1 1.500 4 2.500 9c1 5 8 6 10 1.500" stroke="#949494" strokeWidth="2.400" />
            <path d="M14 1v7H7z" fill="#949494" />
          </Svg>
        </ToolButton>
        <input aria-label="Number of cycles" disabled defaultValue="1" className="h-5 w-20 border border-[#7f9db9] bg-[#ece9d8] px-[5px] text-right text-[11px] text-[#aca899]" />
        <div className="relative flex h-5 w-14 border border-[#c9c7ba] bg-[#f5f4ea]">
          <select aria-label="Cycle unit" disabled className="w-full appearance-none pl-[2px] text-[11px] text-[#aca899]">
            <option>Cycles</option>
          </select>
          <span className="pointer-events-none absolute inset-y-0 right-0 flex w-4 items-center justify-center bg-[#e9e7db]">
            <Svg w={9} h={6} smooth>
              <path d="M1 1l3.500 3.500L8 1" stroke="#bfbcae" strokeWidth="2" />
            </Svg>
          </span>
        </div>
        <time className="w-[56px] pl-1 text-center text-[11px] font-bold">16:00:54</time>
        <ToolButton label="Clock">
          <Svg smooth>
            <circle cx="8" cy="8" r="7" fill="#fff" stroke="#7c90c4" strokeWidth="1.500" />
            <path d="M8 3v6h4" stroke="#1e32c8" strokeWidth="1.800" />
          </Svg>
        </ToolButton>
        <ToolButton label="Network"><GrayIcon d="M2 0h5v5H2zM4 5h2v7H4zM4 7h9v2H4zM3 11h5v5H3zM11 8h2v3h-2zM10 11h6v5h-6z" /></ToolButton>
        <ToolButton label="Data table">
          <Svg>
            <path d="M.5 .5h14v15H.5z" fill="#fff" stroke="#7f9db9" />
            <path d="M2 4.500h12M2 7.500h12M2 10.500h12M2 12.500h12" stroke="#1e32c8" strokeDasharray="3 1" />
          </Svg>
        </ToolButton>
        <ToolButton label="Message text">
          <Svg>
            <path d="M0 2h16v12H0z" fill="#8e8e8e" />
            <path d="M0 5.500h16M0 9.500h16M4.500 2v12M8.500 2v12M12.500 2v12" stroke="#999" />
          </Svg>
        </ToolButton>
      </div>
    </div>
  );
}

function Editor() {
  return (
    <main className="flex min-w-0 flex-1 flex-col border-t border-l border-[#919191]">
      <h1 className="h-[21px] shrink-0 bg-[#2e364d] pl-1 text-xs leading-5 font-bold text-white">Diagram Editor</h1>
      <EditorToolbar />
      <DocTabs />
      <div className="flex min-h-0 flex-1">
        <div className="flex min-w-0 flex-1 flex-col">
          <div className="flex min-h-0 flex-1 overflow-hidden bg-white">
            <Circuit />
          </div>
          <div className="flex h-[17px] shrink-0 items-center bg-linear-to-b from-[#f0eee4] to-white pr-[2px] pl-px">
            <ScrollArrow dir="left" />
            <span className="w-[44px]" />
            <div className="flex h-4 w-[331px] items-center justify-center border border-[#919191] bg-[#f0f0f0]">
              <Grip />
            </div>
            <span className="flex-1" />
            <ScrollArrow dir="right" />
          </div>
        </div>
        <div className="mb-[17px] flex w-4 shrink-0 flex-col items-start bg-linear-to-r from-[#f0eee4] to-white py-px">
          <ScrollArrow dir="up" />
          <div className="mt-px flex h-[357px] w-[15px] items-center justify-center border border-[#919191] bg-[#f0f0f0]">
            <Grip vertical />
          </div>
          <span className="flex-1" />
          <ScrollArrow dir="down" />
        </div>
      </div>
      <div className="h-1 shrink-0 bg-[#e2e2e2]" />
      <SimulationBar />
    </main>
  );
}

/* ---------- window frame ---------- */

function TitleBar() {
  return (
    <header className="flex h-[29px] shrink-0 items-center bg-linear-to-b from-[#0a5ae8] via-[#0054e3] to-[#0468ff] pt-[2px] pr-px pl-[2px]">
      <div className="flex h-4 w-4 flex-col items-center justify-center bg-[#44525c] text-[5px] leading-[7px] text-white">
        <span>LOGO</span>
        <span>V8</span>
      </div>
      <span className="flex-1 pl-1 font-['Open_Sans',sans-serif] text-xs leading-5 font-bold text-white [text-shadow:1px_1px_0_#0a246a]">LOGO!Soft Comfort Demo version</span>
      <div className="flex gap-[2px]">
        <button type="button" aria-label="Minimize" className="h-[21px] w-[21px] rounded-[3px] border border-white bg-linear-to-br from-[#6d92ee] to-[#1d4fd0]">
          <Svg w={19} h={19}>
            <path d="M4 13h7v3H4z" fill="#fff" />
          </Svg>
        </button>
        <button type="button" aria-label="Maximize" className="h-[21px] w-[21px] rounded-[3px] border border-white bg-linear-to-br from-[#6d92ee] to-[#1d4fd0]">
          <Svg w={19} h={19}>
            <path d="M4.500 5.500h10v9h-10z" stroke="#fff" />
            <path d="M4 4h11v3H4z" fill="#fff" />
          </Svg>
        </button>
        <button type="button" aria-label="Close" className="h-[21px] w-[21px] rounded-[3px] border border-white bg-linear-to-br from-[#f0906c] to-[#d03c14]">
          <Svg w={19} h={19} smooth>
            <path d="M5 5l9 9M14 5l-9 9" stroke="#fff" strokeWidth="2.200" />
          </Svg>
        </button>
      </div>
    </header>
  );
}

function MainToolbar() {
  return (
    <div className="flex h-[25px] shrink-0 items-center border-t border-b border-t-white border-b-[#a0a0a0] bg-[#e2e2e2] pl-px">
      <ToolButton label="New"><NewDocIcon /></ToolButton>
      <button type="button" aria-label="New file type" className="flex w-[14px] justify-center"><DropIcon /></button>
      <ToolButton label="Open"><OpenIcon /></ToolButton>
      <ToolButton label="Close file"><FolderUpIcon /></ToolButton>
      <ToolButton label="Save"><SaveIcon /></ToolButton>
      <ToolButton label="Print"><PrintIcon /></ToolButton>
      <Sep />
      <ToolButton label="Delete"><DeleteIcon /></ToolButton>
      <ToolButton label="Cut"><CutIcon /></ToolButton>
      <ToolButton label="Copy"><CopyIcon /></ToolButton>
      <ToolButton label="Paste"><PasteIcon /></ToolButton>
      <Sep />
      <ToolButton label="Undo"><UndoIcon /></ToolButton>
      <ToolButton label="Redo"><RedoIcon /></ToolButton>
      <Sep />
      <ToolButton label="Start LOGO!"><ModuleIcon d="M9 7l5 4-5 4z" /></ToolButton>
      <ToolButton label="Stop LOGO!"><ModuleIcon d="M8 9h5v5H8z" /></ToolButton>
      <Sep />
      <ToolButton label="PC to LOGO!"><ModuleIcon d="M10 4h2v7h3l-4 4-4-4h3z" /></ToolButton>
      <ToolButton label="LOGO! to PC"><ModuleIcon d="M10 14h2V8h3l-4-5-4 5h3z" /></ToolButton>
      <Sep />
      <ToolButton label="Context help"><HelpIcon /></ToolButton>
    </div>
  );
}

const menus = ["File", "Edit", "Format", "View", "Tools", "Window", "Help"];

export default function App() {
  return (
    <div className={`flex h-screen flex-col overflow-hidden border-x-4 border-b-[5px] border-[#0a46dc] bg-[#e2e2e2] text-black ${UI}`}>
      <TitleBar />
      <nav className="flex h-5 shrink-0 items-center gap-[13px] border-b border-[#aca899] bg-[#dcdcdc] pl-[5px] text-[11px]">
        {menus.map((m) => (
          <button key={m} type="button" className="pt-px leading-4">{m}</button>
        ))}
      </nav>
      <MainToolbar />
      <div className={`flex h-7 shrink-0 items-end border-b border-[#6e6e6e] bg-[#aeaeae] pl-[7px] text-xs font-bold ${ARIAL}`}>
        <button type="button" className="-mb-px h-[21px] w-[112px] bg-white pl-1 leading-5 text-[#0000f0]">Diagram Mode</button>
        <button type="button" className="h-5 w-[113px] border-l border-[#919191] bg-[#e2e2e2] pl-1 leading-5 text-[#404040]">Network Project</button>
      </div>
      <div className="h-1 shrink-0 bg-white" />
      <div className="flex min-h-0 flex-1">
        <Sidebar />
        <div className="w-1 shrink-0" />
        <Editor />
      </div>
      <footer className="flex h-[21px] shrink-0 items-stretch border-t border-[#7f9db9] bg-[#e2e2e2] text-[11px]">
        <span className="flex-1 pl-[2px] leading-5">Simulation</span>
        <span className="flex w-[95px] items-center gap-1 border-l border-[#7f9db9] pl-[2px] leading-5">
          <Svg w={13} h={14}>
            <path d="M0 0h13v14H0z" fill="#3c4654" />
            <path d="M2 2h3v3H2zM6 6h6v7H6z" fill="#cfd6e0" />
            <path d="M7 7h4v3H7z" fill="#3c4654" />
          </Svg>
          0BA8.Standard
        </span>
        <span className="w-[47px] border-l border-[#7f9db9] pl-[2px] leading-5">150%</span>
        <span className="w-[38px] border-l border-[#7f9db9]" />
      </footer>
    </div>
  );
}
